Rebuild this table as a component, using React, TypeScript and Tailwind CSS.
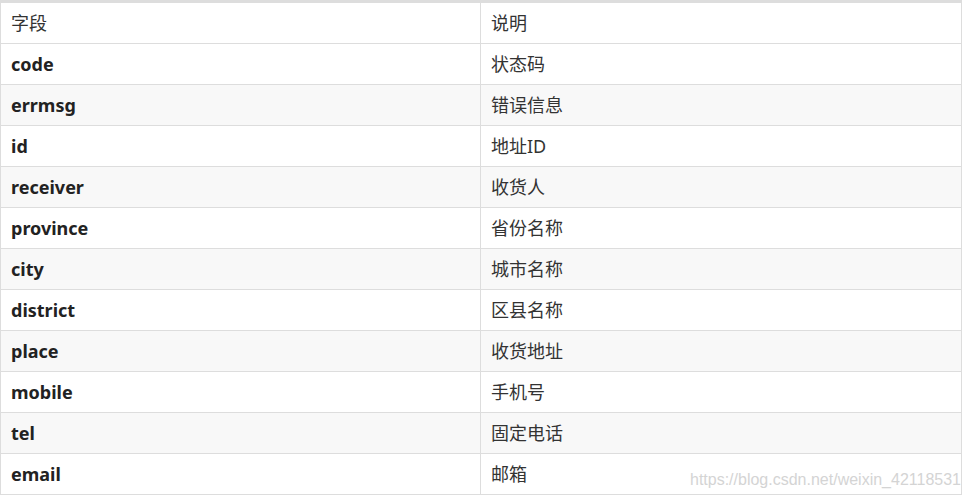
const ROWS: [string, string][] = [
  ["code", "状态码"],
  ["errmsg", "错误信息"],
  ["id", "地址ID"],
  ["receiver", "收货人"],
  ["province", "省份名称"],
  ["city", "城市名称"],
  ["district", "区县名称"],
  ["place", "收货地址"],
  ["mobile", "手机号"],
  ["tel", "固定电话"],
  ["email", "邮箱"],
];

export default function App() {
  return (
    <div
      className="relative w-[968px] h-[498px] bg-white text-[#333] text-[18px] leading-[24px]"
      style={{ fontFamily: '"Noto Sans", "Noto Sans CJK SC", sans-serif' }}
    >
      <div className="w-[962px] border-l border-r border-t-[3px] border-[#dddddd]">
        <div className="grid grid-cols-[480px_1fr] h-[41px] border-b border-[#dddddd] bg-white">
          <div className="flex items-center px-[10px] border-r border-[#dddddd]">字段</div>
          <div className="flex items-center px-[10px]">说明</div>
        </div>
        {ROWS.map(([k, v], i) => (
          <div
            key={k}
            className={
              "grid grid-cols-[480px_1fr] h-[41px] border-b border-[#dddddd] " +
              (i % 2 === 1 ? "bg-[#f8f8f8]" : "bg-white")
            }
          >
            <div className="flex items-center px-[10px] font-bold text-[#222] border-r border-[#dddddd]">{k}</div>
            <div className="flex items-center px-[10px]">{v}</div>
          </div>
        ))}
      </div>
      {/* watermark */}
      <div
        className="absolute right-[7px] top-[468px] text-[16px] text-[#d4d4d4]"
        style={{ fontFamily: '"Liberation Sans", Arial, sans-serif' }}
      >
        https://blog.csdn.net/weixin_42118531
      </div>
    </div>
  );
}
